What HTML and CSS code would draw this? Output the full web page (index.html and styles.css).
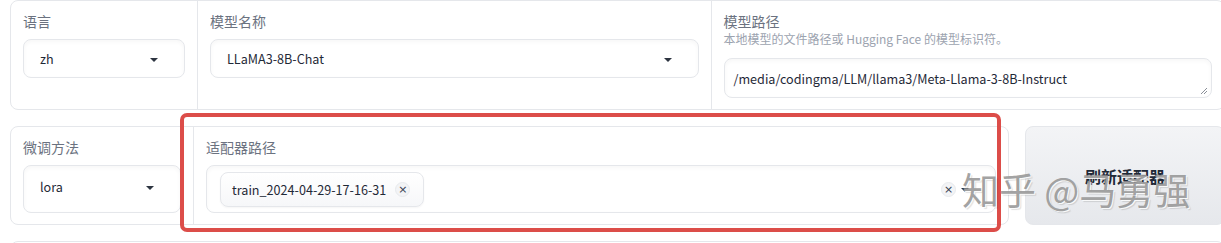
FILE: index.html
```html
<!DOCTYPE html>
<html lang="zh">
<head>
<meta charset="utf-8">
<link rel="stylesheet" href="styles.css">
</head>
<body>
<div class="page">
  <div class="form row1">
    <div class="col col-lang">
      <span class="label">语言</span>
      <div class="select">
        <span class="value">zh</span>
        <svg class="caret" viewBox="0 0 18 18" width="18" height="18"><path d="M5 8l4 4 4-4z"/></svg>
      </div>
    </div>
    <div class="col col-grow">
      <span class="label">模型名称</span>
      <div class="select">
        <span class="value">LLaMA3-8B-Chat</span>
        <svg class="caret" viewBox="0 0 18 18" width="18" height="18"><path d="M5 8l4 4 4-4z"/></svg>
      </div>
    </div>
    <div class="col col-grow">
      <span class="label">模型路径</span>
      <span class="info">本地模型的文件路径或 Hugging Face 的模型标识符。</span>
      <div class="textarea">
        <span class="value">/media/codingma/LLM/llama3/Meta-Llama-3-8B-Instruct</span>
        <svg class="resize" viewBox="0 0 8 8" width="8" height="8"><path d="M7 1L1 7M7 4L4 7" stroke="#8a8f98" stroke-width="1" fill="none"/></svg>
      </div>
    </div>
  </div>

  <div class="row2">
    <div class="form form2">
      <div class="col col-method">
        <span class="label">微调方法</span>
        <div class="select tall">
          <span class="value">lora</span>
          <svg class="caret" viewBox="0 0 18 18" width="18" height="18"><path d="M5 8l4 4 4-4z"/></svg>
        </div>
      </div>
      <div class="col col-grow">
        <span class="label">适配器路径</span>
        <div class="multi">
          <span class="chip">
            <span class="chip-text">train_2024-04-29-17-16-31</span>
            <span class="chip-x">×</span>
          </span>
          <span class="spacer"></span>
          <span class="clear">×</span>
          <svg class="caret" viewBox="0 0 18 18" width="18" height="18"><path d="M5 8l4 4 4-4z"/></svg>
        </div>
      </div>
    </div>
    <button class="btn">刷新适配器</button>
    <div class="highlight"></div>
    <div class="watermark">知乎 @马勇强</div>
  </div>

  <div class="form row3"></div>
</div>
</body>
</html>
```

FILE: styles.css
```css
* { box-sizing: border-box; }
html, body {
  margin: 0;
  padding: 0;
  background: #ffffff;
  overflow: hidden;
  width: 1221px;
  height: 243px;
}
body {
  font-family: "Noto Sans CJK SC", "Noto Sans", sans-serif;
  color: #1f2937;
  font-size: 14px;
}
.page {
  width: 1215px;
  margin-left: 10px;
  display: flex;
  flex-direction: column;
  gap: 16px;
}
.form {
  display: flex;
  border: 1px solid #e5e7eb;
  border-radius: 8px;
  background: #fff;
}
.row1 { height: 110px; }
.col {
  display: flex;
  flex-direction: column;
  padding: 10px 12px 11px 12px;
}
.col + .col { border-left: 1px solid #e5e7eb; }
.col-lang { flex: 0 0 186px; }
.col-method { flex: 0 0 182px; }
.col-grow { flex: 1 1 0; min-width: 0; }
.label {
  display: block;
  font-size: 14px;
  line-height: 20px;
  color: #6b7280;
  margin-bottom: 8px;
}
.info {
  display: block;
  font-size: 12px;
  line-height: 16px;
  color: #9ca3af;
  margin-top: -8px;
  margin-bottom: 11px;
}
.select {
  height: 39px;
  display: flex;
  align-items: center;
  border: 1px solid #e5e7eb;
  border-radius: 8px;
  padding: 0 21px 0 16px;
  box-shadow: inset 0 2px 4px rgba(0, 0, 0, 0.035);
  background: #fff;
}
.select.tall { height: 48px; padding-bottom: 5px; }
.value {
  flex: 1;
  font-size: 12.6px;
  color: #1f2937;
  white-space: nowrap;
}
.caret { flex: none; fill: #2d3440; display: block; }
.textarea {
  position: relative;
  height: 40px;
  display: flex;
  align-items: center;
  border: 1px solid #e5e7eb;
  border-radius: 8px;
  padding: 0 9px;
  box-shadow: inset 0 2px 4px rgba(0, 0, 0, 0.035);
}
.resize {
  position: absolute;
  right: 3px;
  bottom: 2px;
}
.row2 {
  position: relative;
  display: flex;
  gap: 16px;
  height: 99px;
}
.form2 { flex: 0 0 999px; }
.multi {
  height: 48px;
  display: flex;
  align-items: center;
  border: 1px solid #e5e7eb;
  border-radius: 8px;
  padding: 0 21px 0 13px;
  box-shadow: inset 0 2px 4px rgba(0, 0, 0, 0.035);
}
.chip {
  height: 35px;
  display: flex;
  align-items: center;
  gap: 9px;
  padding: 0 13px 0 11px;
  border: 1px solid #e5e7eb;
  border-radius: 8px;
  background: linear-gradient(#ffffff, #f6f7f9);
  box-shadow: 0 1px 2px rgba(0, 0, 0, 0.04);
}
.chip-text { font-size: 12.6px; color: #1f2937; white-space: nowrap; }
.chip-x, .clear {
  width: 15px;
  height: 15px;
  border-radius: 50%;
  background: #f3f4f6;
  border: 1px solid #e8eaed;
  display: flex;
  align-items: center;
  justify-content: center;
  font-size: 11px;
  line-height: 1;
  color: #374151;
  font-family: "DejaVu Sans", sans-serif;
}
.spacer { flex: 1; }
.btn {
  flex: 1;
  border: 1px solid #e5e7eb;
  border-radius: 8px;
  background: linear-gradient(#f3f4f6, #e6e8ec);
  font-family: "Noto Sans CJK SC", sans-serif;
  font-size: 16px;
  font-weight: 600;
  color: #1f2937;
  padding: 0;
}
.highlight {
  position: absolute;
  left: 170px;
  top: -13px;
  width: 821px;
  height: 119px;
  border: 4px solid #dc4d49;
  border-radius: 7px;
  pointer-events: none;
}
.watermark {
  position: absolute;
  left: 952px;
  top: 43px;
  font-size: 37px;
  line-height: 40px;
  color: rgba(150, 150, 150, 0.9);
  text-shadow: 1px 1px 0 rgba(255, 255, 255, 0.9), 2px 2px 1px rgba(0, 0, 0, 0.12);
  white-space: nowrap;
  pointer-events: none;
}
.row3 { height: 40px; }
```
